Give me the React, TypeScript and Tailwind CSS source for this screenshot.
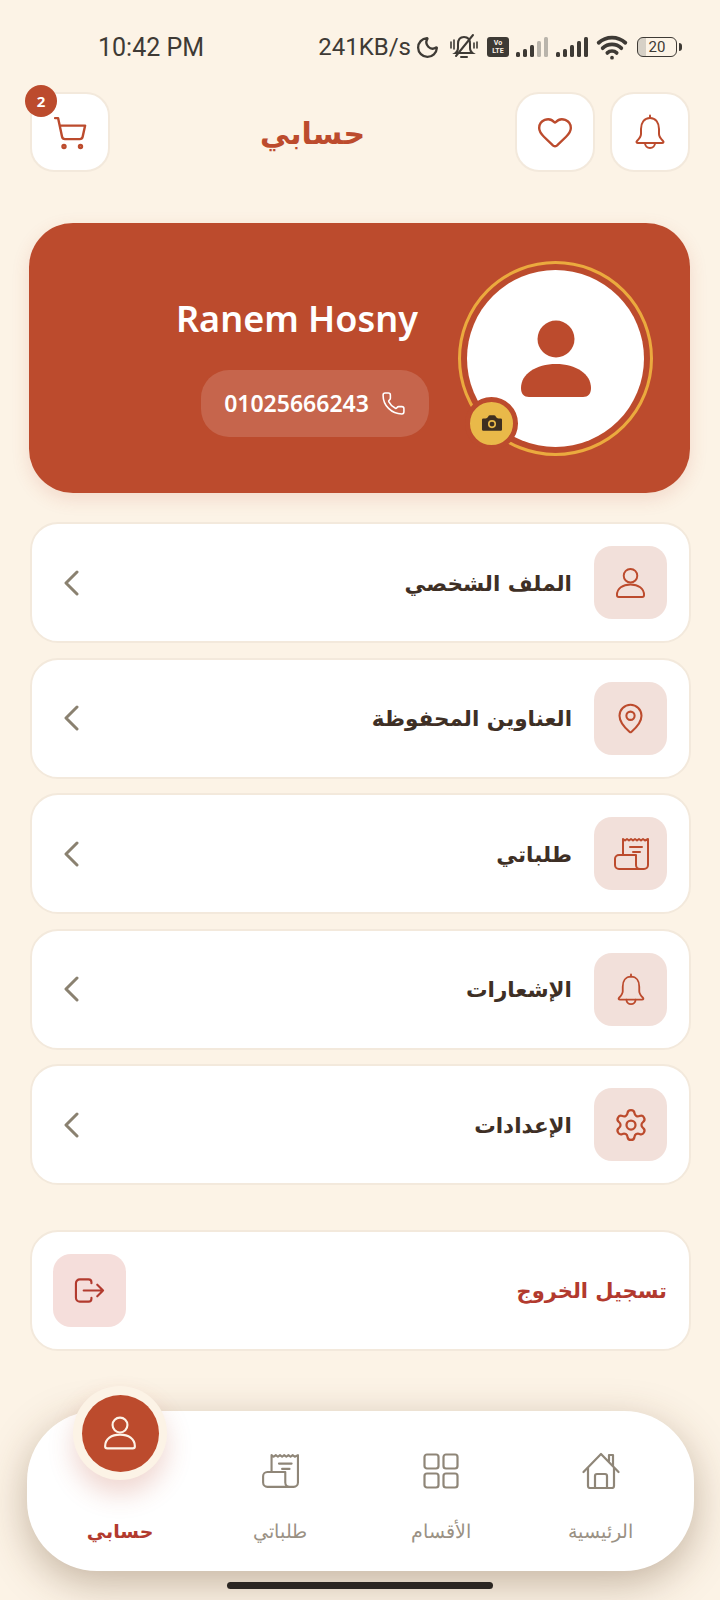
import { Camera, Heart, MapPin, Moon, Phone, Settings, ShoppingCart, Wifi } from 'lucide-react';

const arabic = 'font-["DejaVu_Sans",sans-serif]';

function BellIcon({ className = '' }: { className?: string }) {
  return (
    <svg viewBox="0 0 30 36" fill="none" stroke="currentColor" strokeWidth="2" strokeLinecap="round" strokeLinejoin="round" className={className}>
      <path d="M15 4C9 4 6 9 6 15v5c0 3-2 5-4 7-1 1-.5 2 1 2h24c1.500 0 2-1 1-2-2-2-4-4-4-7v-5c0-6-3-11-9-11Z" />
      <path d="M15 1.500V4" />
      <path d="M10 29a5 5 0 0 0 10 0" />
    </svg>
  );
}

function MutedBell() {
  return (
    <svg viewBox="0 0 30 28" fill="none" stroke="#3E3A35" strokeWidth="2" strokeLinecap="round" className="w-[30px] h-[28px]">
      <path d="M15 4c-4 0-6 3-6 7v4c0 2-1 4-2.500 5h17C22 19 21 17 21 15v-4c0-4-2-7-6-7Z" />
      <path d="M12 24h6" />
      <path d="M24 2 7 23" />
      <path d="M2 9v6M5 7v9M28 9v6M25 10v5" strokeWidth="1.600" />
    </svg>
  );
}

function UserLine({ className = '' }: { className?: string }) {
  return (
    <svg viewBox="0 0 32 33" fill="none" stroke="currentColor" strokeWidth="2" strokeLinejoin="round" className={className}>
      <circle cx="16" cy="9" r="7" />
      <path d="M2 29c0-7 6-11 14-11s14 4 14 11c0 1-.5 2-2 2H4c-1.500 0-2-1-2-2Z" />
    </svg>
  );
}

function ReceiptIcon({ className = '' }: { className?: string }) {
  return (
    <svg viewBox="0 0 36 34" fill="none" stroke="currentColor" strokeWidth="2" strokeLinecap="round" strokeLinejoin="round" className={className}>
      <path d="M10 17V2l2 1.500 2-1.500 2 1.500 2-1.500 2 1.500 2-1.500 2 1.500 2-1.500 2 1.500 2-1.500 2 1.500 3-1.500V28a4 4 0 0 1-4 4H6a4 4 0 0 1-4-4v-6a4 4 0 0 1 4-4h17v10a4 4 0 0 0 4 4" />
      <path d="M17 10h12M20 15h7" />
    </svg>
  );
}

function HomeIcon({ className = '' }: { className?: string }) {
  return (
    <svg viewBox="0 0 38 37" fill="none" stroke="currentColor" strokeWidth="2.200" strokeLinejoin="round" strokeLinecap="round" className={className}>
      <path d="M1.500 20 19 2l17.500 18" />
      <path d="M27 9V3h4v11" />
      <path d="M6 16v18a2 2 0 0 0 2 2h22a2 2 0 0 0 2-2V16" />
      <path d="M13 36V24a2 2 0 0 1 2-2h8a2 2 0 0 1 2 2v12" />
    </svg>
  );
}

function GridIcon({ className = '' }: { className?: string }) {
  return (
    <svg viewBox="0 0 36 36" fill="none" stroke="currentColor" strokeWidth="2.200" className={className}>
      <rect x="1.500" y="1.500" width="14" height="14" rx="2.500" />
      <rect x="20.500" y="1.500" width="14" height="14" rx="2.500" />
      <rect x="1.500" y="20.500" width="14" height="14" rx="2.500" />
      <rect x="20.500" y="20.500" width="14" height="14" rx="2.500" />
    </svg>
  );
}

function LogoutIcon({ className = '' }: { className?: string }) {
  return (
    <svg viewBox="0 0 32 27" fill="none" stroke="currentColor" strokeWidth="2.200" strokeLinecap="round" strokeLinejoin="round" className={className}>
      <path d="M18 6V5a3 3 0 0 0-3-3H6a4 4 0 0 0-4 4v15a4 4 0 0 0 4 4h9a3 3 0 0 0 3-3v-1" />
      <path d="M10 13.500h20M24 7.500l6 6-6 6" />
    </svg>
  );
}

function Chevron() {
  return (
    <svg viewBox="0 0 16 26" fill="none" stroke="#8A8170" strokeWidth="3" strokeLinecap="round" strokeLinejoin="round" className="w-4 h-[26px]">
      <path d="M14 2 3 13l11 11" />
    </svg>
  );
}

function Signal({ faded = false }: { faded?: boolean }) {
  const fill = '#3E3A35';
  const last = faded ? '#B9B4AB' : fill;
  return (
    <svg viewBox="0 0 32 22" className="w-8 h-[22px]">
      <rect x="0" y="16" width="4" height="5" rx="1.500" fill={fill} />
      <rect x="7" y="13" width="4" height="8" rx="1.500" fill={fill} />
      <rect x="14" y="9" width="4" height="12" rx="1.500" fill={fill} />
      <rect x="21" y="5" width="4" height="16" rx="1.500" fill={last} />
      <rect x="28" y="1" width="4" height="20" rx="1.500" fill={last} />
    </svg>
  );
}

function StatusBar() {
  return (
    <div className='flex items-center h-[26px] mt-[34px] pl-[98px] pr-[38px] text-[#3E3A35] font-["Roboto",sans-serif] leading-none'>
      <span className="text-[25px]">10:42 PM</span>
      <span className="ml-auto text-[24px]">241KB/s</span>
      <Moon size={25} strokeWidth={2.200} className="ml-[4px]" />
      <div className="ml-[9px]"><MutedBell /></div>
      <div className="ml-[8px] w-[22px] h-[20px] rounded-[3px] bg-[#3E3A35] text-[#FDF3E8] text-[7px] leading-[8px] font-bold flex flex-col items-center justify-center">
        <span>Vo</span>
        <span>LTE</span>
      </div>
      <div className="ml-[7px]"><Signal faded /></div>
      <div className="ml-[8px]"><Signal /></div>
      <Wifi size={32} strokeWidth={2.800} className="ml-[8px]" />
      <div className="ml-[9px] w-[40px] h-[20px] border-[1.500px] border-[#3E3A35] rounded-[6px] flex items-center justify-center text-[15px] bg-[linear-gradient(90deg,#D6D0C6_20%,transparent_20%)]">
        20
      </div>
      <div className="w-[3px] h-[8px] ml-[2px] bg-[#3E3A35] rounded-r-sm" />
    </div>
  );
}

function HeaderButton({ children }: { children: React.ReactNode }) {
  return (
    <button className="relative w-20 h-20 rounded-[24px] bg-white border-2 border-[#F3E9DC] flex items-center justify-center text-[#BC4B2D]">
      {children}
    </button>
  );
}

function Header() {
  return (
    <div dir="rtl" className="flex items-center justify-between px-[30px] mt-[32px] h-20">
      <div className="flex gap-[15px]">
        <HeaderButton><BellIcon className="w-[30px] h-9" /></HeaderButton>
        <HeaderButton><Heart size={38} strokeWidth={1.500} /></HeaderButton>
      </div>
      <h1 className={`${arabic} pt-[2px] text-[30px] font-bold text-[#BC4B2D]`}>حسابي</h1>
      <HeaderButton>
        <ShoppingCart size={36} strokeWidth={1.600} className="translate-y-[1px]" />
        <span className='absolute -top-[9px] -left-[7px] w-8 h-8 rounded-full bg-[#BC4B2D] text-white text-[15px] font-bold font-["Noto_Sans",sans-serif] flex items-center justify-center'>2</span>
      </HeaderButton>
    </div>
  );
}

function ProfileCard() {
  return (
    <div dir="rtl" className="ml-[29px] w-[661px] mt-[51px] h-[270px] rounded-[44px] bg-[#BC4B2D] shadow-[0_6px_18px_rgba(188,75,45,0.15)] flex items-center gap-[29px] pr-[37px]">
      <div className="relative w-[195px] h-[195px] rounded-full border-[3px] border-[#EBAA3E] p-[6px] shrink-0">
        <div className="w-full h-full rounded-full bg-white flex items-center justify-center">
          <svg viewBox="0 0 72 77" fill="#BC4B2D" className="w-[72px] h-[77px]">
            <circle cx="36" cy="19" r="18.500" />
            <path d="M1 68C1 54 16 44 36 44s35 10 35 24c0 6-3 9-8 9H9c-5 0-8-3-8-9Z" />
          </svg>
        </div>
        <div className="absolute left-[4px] top-[133px] w-[53px] h-[53px] rounded-full bg-[#E9B949] border-[5px] border-[#BC4B2D] flex items-center justify-center">
          <Camera size={26} fill="#3E2F20" stroke="#E9B949" strokeWidth={1.500} />
        </div>
      </div>
      <div className="flex flex-col items-start mt-[16px]">
        <div dir="ltr" className='pr-[11px] font-["Noto_Sans",sans-serif] font-semibold text-[36px] leading-[48px] text-white'>Ranem Hosny</div>
        <div className="mt-[27px] h-[67px] w-[228px] rounded-[28px] bg-white/15 flex items-center justify-center gap-[12px] text-white">
          <Phone size={25} strokeWidth={1.500} />
          <span className='font-["Noto_Sans",sans-serif] font-semibold text-[23px]'>01025666243</span>
        </div>
      </div>
    </div>
  );
}

const rows = [
  { label: 'الملف الشخصي', icon: <UserLine className="w-[31px] h-[32px]" /> },
  { label: 'العناوين المحفوظة', icon: <MapPin size={33} strokeWidth={1.500} /> },
  { label: 'طلباتي', icon: <ReceiptIcon className="w-[36px] h-[34px]" /> },
  { label: 'الإشعارات', icon: <BellIcon className="w-[28px] h-[33px]" /> },
  { label: 'الإعدادات', icon: <Settings size={36} strokeWidth={1.500} /> },
];

function MenuRow({ label, icon }: { label: string; icon: React.ReactNode }) {
  return (
    <div dir="rtl" className="h-[121px] rounded-[28px] bg-white border-2 border-[#F3E9DC] flex items-center pr-[22px] pl-[31px]">
      <div className="w-[73px] h-[73px] rounded-[18px] bg-[#F2E0DA] text-[#BC4B2D] flex items-center justify-center">{icon}</div>
      <span className={`${arabic} mr-[22px] pt-[3px] text-[21.500px] font-bold text-[#3E2F25]`}>{label}</span>
      <div className="mr-auto"><Chevron /></div>
    </div>
  );
}

function NavItem({ label, icon }: { label: string; icon: React.ReactNode }) {
  return (
    <div className="flex flex-col items-center text-[#8F8678]">
      <div className="mt-[41px] h-[37px] flex items-center">{icon}</div>
      <span className={`${arabic} mt-[27px] text-[19px] leading-[30px] font-light text-[#9A9184]`}>{label}</span>
    </div>
  );
}

function BottomNav() {
  return (
    <div dir="rtl" className="relative mt-[60px] ml-[27px] w-[667px] h-[160px] rounded-[70px] bg-white shadow-[0_12px_40px_rgba(90,60,30,0.34)] grid grid-cols-4 px-[13px]">
      <NavItem label="الرئيسية" icon={<HomeIcon className="w-[38px] h-[37px]" />} />
      <NavItem label="الأقسام" icon={<GridIcon className="w-9 h-9" />} />
      <NavItem label="طلباتي" icon={<ReceiptIcon className="w-[38px] h-[36px]" />} />
      <div className="flex flex-col items-center">
        <span className={`${arabic} mt-[105px] text-[19px] font-bold leading-[30px] text-[#B23A2E]`}>حسابي</span>
      </div>
      <div className="absolute left-[46px] -top-[25px] w-[94px] h-[94px] rounded-full bg-[#FCF3E6] shadow-[0_14px_26px_rgba(188,75,45,0.22)] flex items-center justify-center">
        <div className="w-[77px] h-[77px] rounded-full bg-[#BC4B2D] text-[#FDF3E8] flex items-center justify-center">
          <UserLine className="w-[34px] h-[36px]" />
        </div>
      </div>
    </div>
  );
}

export default function App() {
  return (
    <div className="relative w-[720px] h-[1600px] overflow-hidden bg-[#FCF3E6] flex flex-col">
      <StatusBar />
      <Header />
      <ProfileCard />
      <div className="ml-[30px] mr-[29px] mt-[29px] flex flex-col gap-[14.500px]">
        {rows.map((row) => (
          <MenuRow key={row.label} label={row.label} icon={row.icon} />
        ))}
      </div>
      <div dir="rtl" className="ml-[30px] mr-[29px] mt-[45px] h-[121px] rounded-[28px] bg-white border-2 border-[#F3E9DC] flex items-center justify-between pr-[22px] pl-[21px]">
        <span className={`${arabic} pt-[3px] text-[21px] font-bold text-[#B23A2E]`}>تسجيل الخروج</span>
        <div className="w-[73px] h-[73px] rounded-[18px] bg-[#F5DEDB] text-[#B23A2E] flex items-center justify-center">
          <LogoutIcon className="w-[31px] h-[27px]" />
        </div>
      </div>
      <BottomNav />
      <div className="absolute left-[227px] top-[1582px] w-[266px] h-[7px] rounded-full bg-[#2B2622]" />
    </div>
  );
}
